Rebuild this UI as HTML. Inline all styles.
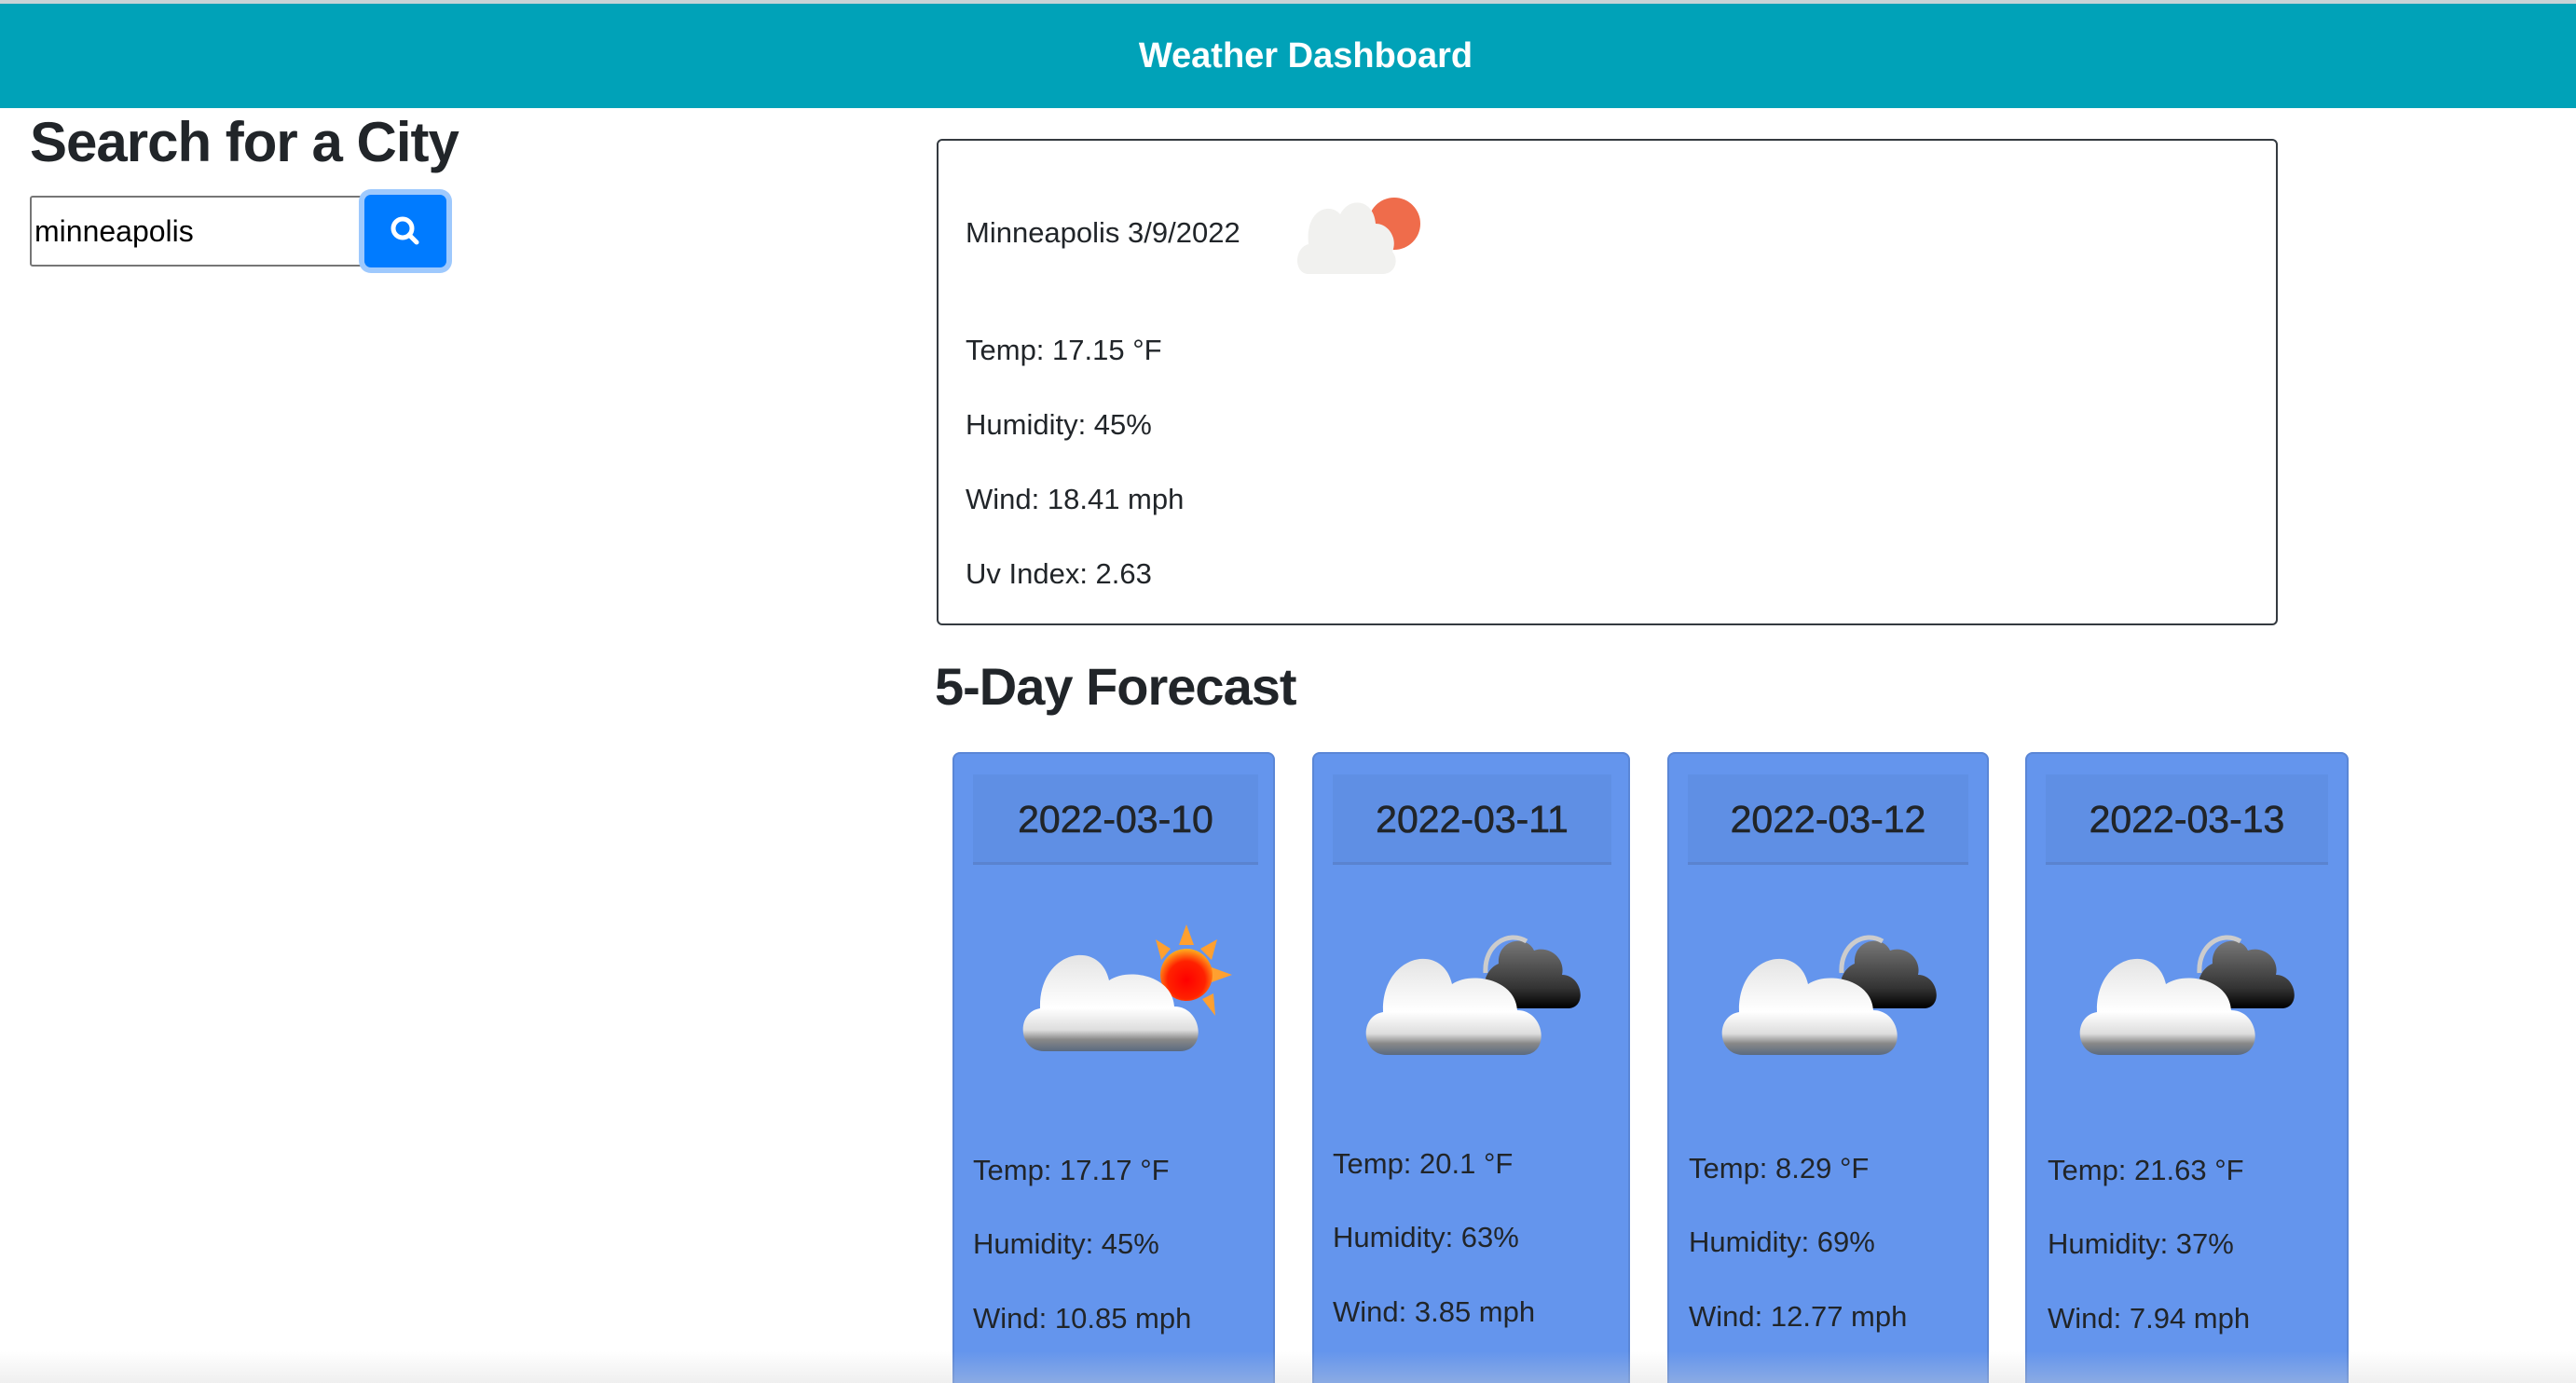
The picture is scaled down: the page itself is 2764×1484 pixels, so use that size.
<!DOCTYPE html>
<html><head><meta charset="utf-8"><style>
*{margin:0;padding:0;box-sizing:border-box}
html,body{width:2764px;height:1484px;overflow:hidden}
body{background:#fff;font-family:"Liberation Sans",Arial,sans-serif;color:#212529;position:relative}
.abs{position:absolute}
.hdr{left:0;top:0;width:2764px;height:116px;background:#00a2b8;border-top:4px solid #c9d3d6}
.hdr div{width:100%;text-align:center;color:#fff;font-weight:700;font-size:38px;line-height:112px;padding-left:38px}
h1{position:absolute;left:32px;top:118px;font-size:60px;font-weight:700;letter-spacing:-1px;white-space:nowrap}
.inp{left:32px;top:210px;width:362px;height:76px;border:2px solid #767676;border-radius:3px;font-size:32px;line-height:72px;padding-left:3px;color:#000}
.btn{left:391px;top:209px;width:88px;height:78px;background:#007bff;border-radius:7px;box-shadow:0 0 0 6px #9ec9fd}
.cur{left:1005px;top:149px;width:1439px;height:522px;border:2px solid #343a40;border-radius:6px}
.t{font-size:31px;white-space:nowrap;line-height:1}
h2{position:absolute;left:1003px;top:704px;font-size:56px;font-weight:700;letter-spacing:-1px;white-space:nowrap}
.card{top:807px;height:690px;background:#6495ed;border:2px solid #5a86d6;border-radius:8px}
.ch{position:absolute;top:22px;height:97px;background:#5f8fe4;border-bottom:3px solid #5a83cf;text-align:center;font-size:41px;line-height:97px;font-weight:400;-webkit-text-stroke:0.6px #212529}
.fade{left:0;top:1450px;width:2764px;height:34px;background:linear-gradient(rgba(255,255,255,0),rgba(210,210,210,.35))}
</style></head><body>
<div class="abs hdr"><div>Weather Dashboard</div></div>
<h1>Search for a City</h1>
<div class="abs inp">minneapolis</div>
<div class="abs btn"><svg width="88" height="78" viewBox="0 0 88 78"><circle cx="41" cy="36" r="10" fill="none" stroke="#fff" stroke-width="5"/><line x1="48" y1="43" x2="56" y2="51" stroke="#fff" stroke-width="5" stroke-linecap="round"/></svg></div>

<div class="abs cur"></div>
<div class="abs t" style="left:1036px;top:234px">Minneapolis 3/9/2022</div>
<svg class="abs" style="left:1390px;top:200px" width="140" height="100" viewBox="0 0 140 100">
<circle cx="106" cy="40" r="28" fill="#ef6c4b"/>
<path d="M14 94 C-2 94 -2 66 14 62 C10 26 36 16 48 30 C58 10 84 14 86 40 C100 40 110 56 104 70 C112 80 106 94 94 94 Z" fill="#f1f1ef"/>
</svg>
<div class="abs t" style="left:1036px;top:360px">Temp: 17.15 °F</div>
<div class="abs t" style="left:1036px;top:440px">Humidity: 45%</div>
<div class="abs t" style="left:1036px;top:520px">Wind: 18.41 mph</div>
<div class="abs t" style="left:1036px;top:600px">Uv Index: 2.63</div>

<h2>5-Day Forecast</h2>

<svg width="0" height="0" style="position:absolute"><defs>
<linearGradient id="cw" x1="0" y1="0" x2="0" y2="1"><stop offset="0" stop-color="#e4e4e4"/><stop offset=".55" stop-color="#fff"/><stop offset=".78" stop-color="#ddd"/><stop offset=".88" stop-color="#888"/><stop offset="1" stop-color="#5a6a80"/></linearGradient>
<linearGradient id="cd" x1="0" y1="0" x2="0" y2="1"><stop offset="0" stop-color="#777"/><stop offset=".7" stop-color="#333"/><stop offset="1" stop-color="#000"/></linearGradient>
<radialGradient id="sn" cx=".5" cy=".6" r=".6"><stop offset="0" stop-color="#f00"/><stop offset=".6" stop-color="#f20"/><stop offset="1" stop-color="#ffb020"/></radialGradient>
<g id="cloud"><path d="M30 138 C2 138 0 96 26 92 C24 30 90 16 100 62 C120 48 168 56 170 90 C200 90 206 138 176 138 Z" fill="url(#cw)"/></g>
<g id="dark"><path d="M150 40 C148 14 180 8 188 26 C204 20 222 34 218 52 C240 52 246 88 224 88 L150 88 C128 84 130 48 150 40 Z" fill="url(#cd)"/><path d="M136 50 C134 20 160 4 180 16" fill="none" stroke="#ccc" stroke-width="5"/></g>
</defs></svg>

<div class="abs card" style="left:1022px;width:346px"><div class="ch" style="left:20px;width:306px">2022-03-10</div></div>
<svg class="abs" style="left:1090px;top:990px" width="260" height="150" viewBox="0 0 260 150">
<g fill="#ffa030"><polygon points="183,2 191,24 175,24"/><polygon points="216,18 210,40 198,28"/><polygon points="232,56 210,64 210,48"/><polygon points="150,18 166,28 156,40"/><polygon points="214,100 200,82 212,76"/></g>
<circle cx="183" cy="56" r="28" fill="url(#sn)"/>
<use href="#cloud"/>
</svg>
<div class="abs t" style="left:1044px;top:1240px">Temp: 17.17 °F</div>
<div class="abs t" style="left:1044px;top:1319px">Humidity: 45%</div>
<div class="abs t" style="left:1044px;top:1399px">Wind: 10.85 mph</div>

<div class="abs card" style="left:1408px;width:341px"><div class="ch" style="left:20px;width:299px">2022-03-11</div></div>
<svg class="abs" style="left:1458px;top:994px" width="260" height="150" viewBox="0 0 260 150"><use href="#dark"/><use href="#cloud"/></svg>
<div class="abs t" style="left:1430px;top:1233px">Temp: 20.1 °F</div>
<div class="abs t" style="left:1430px;top:1312px">Humidity: 63%</div>
<div class="abs t" style="left:1430px;top:1392px">Wind: 3.85 mph</div>

<div class="abs card" style="left:1789px;width:345px"><div class="ch" style="left:20px;width:301px">2022-03-12</div></div>
<svg class="abs" style="left:1840px;top:994px" width="260" height="150" viewBox="0 0 260 150"><use href="#dark"/><use href="#cloud"/></svg>
<div class="abs t" style="left:1812px;top:1238px">Temp: 8.29 °F</div>
<div class="abs t" style="left:1812px;top:1317px">Humidity: 69%</div>
<div class="abs t" style="left:1812px;top:1397px">Wind: 12.77 mph</div>

<div class="abs card" style="left:2173px;width:347px"><div class="ch" style="left:20px;width:303px">2022-03-13</div></div>
<svg class="abs" style="left:2224px;top:994px" width="260" height="150" viewBox="0 0 260 150"><use href="#dark"/><use href="#cloud"/></svg>
<div class="abs t" style="left:2197px;top:1240px">Temp: 21.63 °F</div>
<div class="abs t" style="left:2197px;top:1319px">Humidity: 37%</div>
<div class="abs t" style="left:2197px;top:1399px">Wind: 7.94 mph</div>

<div class="abs fade"></div>
</body></html>
